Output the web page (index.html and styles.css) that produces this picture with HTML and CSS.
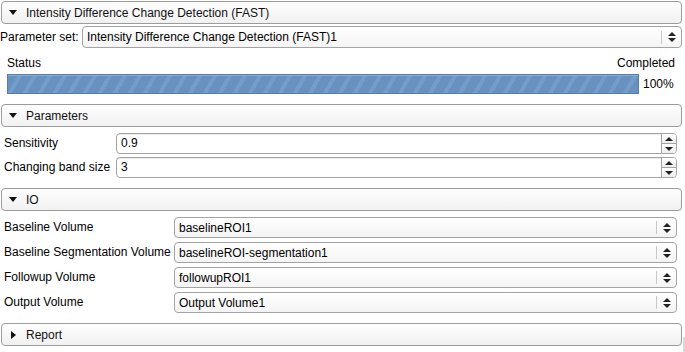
FILE: index.html
```html
<!DOCTYPE html>
<html lang="en">
<head>
    <meta charset="UTF-8">
    <title>Intensity Difference Change Detection (FAST)</title>
    <link rel="stylesheet" href="styles.css">
</head>
<body>

    <!-- Module header -->
    <div class="section-head"><span class="tri down"></span>Intensity Difference Change Detection (FAST)</div>

    <div class="param-set">
        <label>Parameter set:</label>
        <div class="combo">
            <span class="combo-text">Intensity Difference Change Detection (FAST)1</span>
            <span class="combo-sep"></span>
            <span class="combo-arrows"><i class="up"></i><i class="dn"></i></span>
        </div>
    </div>

    <div class="status-row">
        <span>Status</span>
        <span>Completed</span>
    </div>
    <div class="progress-row">
        <div class="progress"><div class="progress-fill" style="width: 100%"></div></div>
        <span class="progress-pct">100%</span>
    </div>

    <!-- Parameters -->
    <div class="section-head"><span class="tri down"></span>Parameters</div>
    <div class="form params">
        <label>Sensitivity</label>
        <div class="spin">
            <span class="spin-text">0.9</span>
            <span class="spin-btns"><span class="spin-btn"><i class="up"></i></span><span class="spin-btn"><i class="dn"></i></span></span>
        </div>
        <label>Changing band size</label>
        <div class="spin">
            <span class="spin-text">3</span>
            <span class="spin-btns"><span class="spin-btn"><i class="up"></i></span><span class="spin-btn"><i class="dn"></i></span></span>
        </div>
    </div>

    <!-- IO -->
    <div class="section-head"><span class="tri down"></span>IO</div>
    <div class="form io">
        <label>Baseline Volume</label>
        <div class="combo">
            <span class="combo-text">baselineROI1</span>
            <span class="combo-sep"></span>
            <span class="combo-arrows"><i class="up"></i><i class="dn"></i></span>
        </div>
        <label>Baseline Segmentation Volume</label>
        <div class="combo">
            <span class="combo-text">baselineROI-segmentation1</span>
            <span class="combo-sep"></span>
            <span class="combo-arrows"><i class="up"></i><i class="dn"></i></span>
        </div>
        <label>Followup Volume</label>
        <div class="combo">
            <span class="combo-text">followupROI1</span>
            <span class="combo-sep"></span>
            <span class="combo-arrows"><i class="up"></i><i class="dn"></i></span>
        </div>
        <label>Output Volume</label>
        <div class="combo">
            <span class="combo-text">Output Volume1</span>
            <span class="combo-sep"></span>
            <span class="combo-arrows"><i class="up"></i><i class="dn"></i></span>
        </div>
    </div>

    <!-- Report -->
    <div class="section-head last"><span class="tri right"></span>Report</div>
    <div class="scroll-edge"></div>

</body>
</html>
```

FILE: styles.css
```css
/* Basic styles */
body {
    font-family: "Liberation Sans", Arial, sans-serif;
    font-size: 12px;
    color: #000;
    background-color: #fff;
    margin: 0;
    padding: 0;
    position: relative;
    height: 352px;
    overflow: hidden;
}

/* Collapsible section headers */
.section-head {
    box-sizing: border-box;
    height: 23px;
    margin: 10px 3px 0 1px;
    border: 1px solid #9c9c9c;
    border-radius: 4px;
    background: linear-gradient(#fefefe, #f1f1f1);
    display: flex;
    align-items: center;
    padding-left: 7px;
    color: #111;
}
body > .section-head:first-child {
    margin-top: 1px;
}
.tri {
    width: 0;
    height: 0;
    margin-right: 9px;
}
.tri.down {
    border-left: 4px solid transparent;
    border-right: 4px solid transparent;
    border-top: 5px solid #111;
}
.tri.right {
    border-top: 4px solid transparent;
    border-bottom: 4px solid transparent;
    border-left: 5px solid #111;
    margin-left: 2px;
    margin-right: 10px;
}

/* Parameter set row */
.param-set {
    display: flex;
    align-items: center;
    margin: 2px 3px 0 0;
}
.param-set label {
    width: 82px;
    flex: none;
}
.param-set .combo {
    flex: 1;
    height: 22px;
}

/* Combo boxes */
.combo {
    box-sizing: border-box;
    height: 21px;
    border: 1px solid #a3a3a3;
    border-radius: 4px;
    background: linear-gradient(#ffffff, #f4f4f4);
    display: flex;
    align-items: center;
    padding-left: 4px;
}
.combo-text {
    flex: 1;
    white-space: nowrap;
    overflow: hidden;
}
.combo-sep {
    width: 1px;
    height: 13px;
    background-color: #c8c8c8;
    margin-right: 5px;
}
.combo-arrows {
    width: 9px;
    margin-right: 5px;
    display: flex;
    flex-direction: column;
    align-items: center;
    gap: 2px;
}
i.up, i.dn {
    display: block;
    width: 0;
    height: 0;
    border-left: 4px solid transparent;
    border-right: 4px solid transparent;
}
i.up {
    border-bottom: 4px solid #222;
}
i.dn {
    border-top: 4px solid #222;
}

/* Status and progress */
.status-row {
    display: flex;
    justify-content: space-between;
    margin-top: 8px;
    padding: 0 10px 0 7px;
    height: 14px;
    line-height: 14px;
}
.progress-row {
    display: flex;
    align-items: center;
    margin-top: 4px;
    padding-left: 7px;
}
.progress {
    box-sizing: border-box;
    width: 632px;
    height: 20px;
    border: 1px solid #5580ad;
    background-color: #e8e8e8;
}
.progress-fill {
    height: 100%;
    background-color: #6891c0;
    background-image: repeating-linear-gradient(-60deg, #6891c0 0px, #6891c0 9px, #749dca 9px, #749dca 13px);
    box-shadow: inset 0 1px 0 #86abd4;
}
.progress-pct {
    margin-left: 4px;
}

/* Form grids */
.form {
    display: grid;
    row-gap: 4px;
    margin: 6px 8px 0 4px;
    align-items: center;
}
.params {
    grid-template-columns: 112px 1fr;
    row-gap: 3px;
}
.io {
    grid-template-columns: 170px 1fr;
}
.form label {
    white-space: nowrap;
    position: relative;
    top: -1px;
}

/* Spin boxes */
.spin {
    box-sizing: border-box;
    height: 21px;
    display: flex;
    border: 1px solid #a3a3a3;
    border-radius: 4px;
    background-color: #fff;
    overflow: hidden;
}
.spin-text {
    flex: 1;
    padding-left: 4px;
    line-height: 19px;
    box-shadow: inset 0 1px 1px rgba(0, 0, 0, 0.08);
}
.spin-btns {
    width: 14px;
    display: flex;
    flex-direction: column;
    border-left: 1px solid #a3a3a3;
}
.spin-btn {
    flex: 1;
    display: flex;
    align-items: center;
    justify-content: center;
    background: linear-gradient(#ffffff, #eeeeee);
}
.spin-btn + .spin-btn {
    border-top: 1px solid #a3a3a3;
}

.scroll-edge {
    position: absolute;
    right: 0;
    top: 337px;
    width: 2px;
    height: 15px;
    background-color: #d8d8d8;
}
```
